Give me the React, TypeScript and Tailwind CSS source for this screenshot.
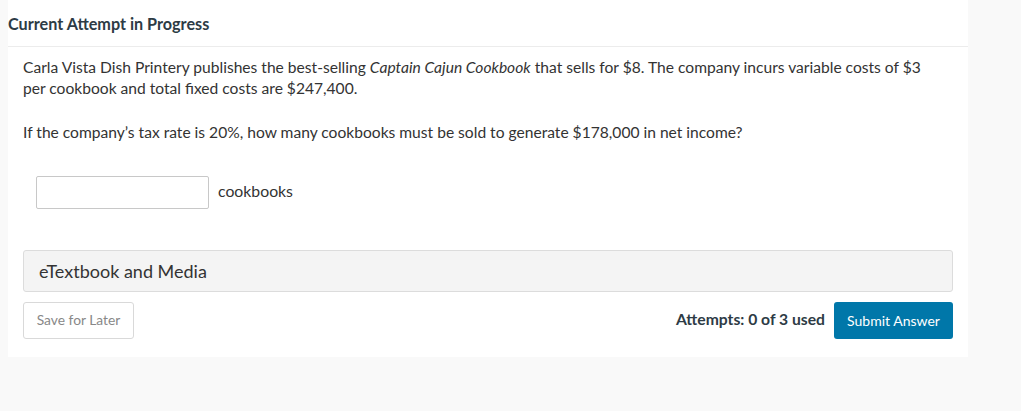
import React from "react";

export default function App() {
  return (
    <div className="min-h-[411px] w-full bg-[#f9f9f9] pl-[8px] font-['Lato',_'Liberation_Sans',_sans-serif] text-[#2d3b45]">
      <div className="w-[960px] bg-white">
        <div className="flex h-[47px] items-center border-b border-[#ececec] pt-[2px] text-[16.2px] font-bold text-[#2d3b45]">
          Current Attempt in Progress
        </div>
        <div className="px-[15px] pt-[10px] pb-[18px]">
          <p className="text-[15.6px] leading-[21px] text-[#333]">
            Carla Vista Dish Printery publishes the best-selling <i>Captain Cajun Cookbook</i> that sells for $8. The company incurs variable costs of $3
            <br />
            per cookbook and total fixed costs are $247,400.
          </p>
          <p className="mt-[23px] text-[15.6px] leading-[21px] text-[#333]">
            If the company’s tax rate is 20%, how many cookbooks must be sold to generate $178,000 in net income?
          </p>
          <div className="mt-[33px] flex items-center pl-[13px]">
            <input
              type="text"
              className="h-[33px] w-[173px] rounded-[2px] border border-[#c8c8c8] bg-white px-2 text-[14px] outline-none"
            />
            <span className="ml-[9px] pb-[4px] text-[15.8px] text-[#333]">cookbooks</span>
          </div>
          <div className="mt-[41px] flex h-[42px] items-center rounded-[3px] border border-[#dcdcdc] bg-[#f4f4f4] pl-[15px] text-[18px] text-[#333]">
            eTextbook and Media
          </div>
          <div className="mt-[10px] flex items-center justify-between">
            <button className="h-[37px] w-[111px] rounded-[3px] border border-[#d9d9d9] bg-white text-[13.8px] text-[#888]">
              Save for Later
            </button>
            <div className="flex items-center">
              <span className="pb-[2px] text-[15.7px] font-bold text-[#2d3b45]">Attempts: 0 of 3 used</span>
              <button className="ml-[9px] h-[37px] w-[119px] rounded-[3px] bg-[#0077a9] text-[14px] text-white">
                Submit Answer
              </button>
            </div>
          </div>
        </div>
      </div>
    </div>
  );
}
